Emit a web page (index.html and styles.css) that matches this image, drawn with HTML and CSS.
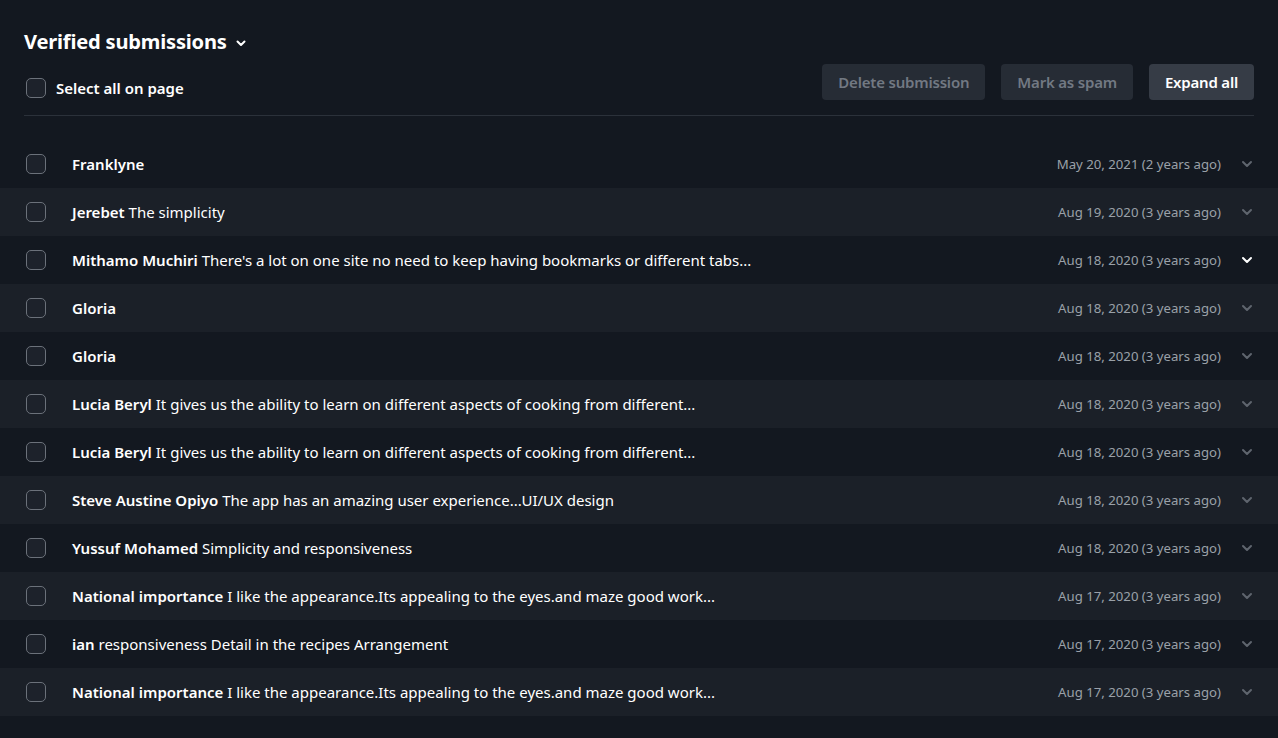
FILE: index.html
```html
<!DOCTYPE html>
<html>
<head>
<meta charset="utf-8">
<link rel="stylesheet" href="styles.css">
</head>
<body>
<div class="page">
  <header class="head">
    <h1 class="title">Verified submissions <svg class="title-chev" width="10" height="7" viewBox="0 0 10 7"><path d="M1.5 1.5 L5 5 L8.5 1.5" fill="none" stroke="#fff" stroke-width="2" stroke-linecap="round" stroke-linejoin="round"/></svg></h1>
    <div class="toolbar">
      <label class="select-all"><span class="box"></span><span>Select all on page</span></label>
      <div class="actions">
        <button class="btn btn-disabled">Delete submission</button>
        <button class="btn btn-disabled">Mark as spam</button>
        <button class="btn btn-primary">Expand all</button>
      </div>
    </div>
  </header>
  <ul class="list">
    <li class="row"><span class="box"></span><span class="text"><b>Franklyne</b></span><span class="date">May 20, 2021 (2 years ago)</span><svg class="chev" viewBox="0 0 10 6"><path d="M1 1 L5 5 L9 1"/></svg></li>
    <li class="row"><span class="box"></span><span class="text"><b>Jerebet</b> The simplicity</span><span class="date">Aug 19, 2020 (3 years ago)</span><svg class="chev" viewBox="0 0 10 6"><path d="M1 1 L5 5 L9 1"/></svg></li>
    <li class="row"><span class="box"></span><span class="text"><b>Mithamo Muchiri</b> There's a lot on one site no need to keep having bookmarks or different tabs...</span><span class="date">Aug 18, 2020 (3 years ago)</span><svg class="chev chev-active" viewBox="0 0 10 6"><path d="M1 1 L5 5 L9 1"/></svg></li>
    <li class="row"><span class="box"></span><span class="text"><b>Gloria</b></span><span class="date">Aug 18, 2020 (3 years ago)</span><svg class="chev" viewBox="0 0 10 6"><path d="M1 1 L5 5 L9 1"/></svg></li>
    <li class="row"><span class="box"></span><span class="text"><b>Gloria</b></span><span class="date">Aug 18, 2020 (3 years ago)</span><svg class="chev" viewBox="0 0 10 6"><path d="M1 1 L5 5 L9 1"/></svg></li>
    <li class="row"><span class="box"></span><span class="text"><b>Lucia Beryl</b> It gives us the ability to learn on different aspects of cooking from different...</span><span class="date">Aug 18, 2020 (3 years ago)</span><svg class="chev" viewBox="0 0 10 6"><path d="M1 1 L5 5 L9 1"/></svg></li>
    <li class="row"><span class="box"></span><span class="text"><b>Lucia Beryl</b> It gives us the ability to learn on different aspects of cooking from different...</span><span class="date">Aug 18, 2020 (3 years ago)</span><svg class="chev" viewBox="0 0 10 6"><path d="M1 1 L5 5 L9 1"/></svg></li>
    <li class="row"><span class="box"></span><span class="text"><b>Steve Austine Opiyo</b> The app has an amazing user experience...UI/UX design</span><span class="date">Aug 18, 2020 (3 years ago)</span><svg class="chev" viewBox="0 0 10 6"><path d="M1 1 L5 5 L9 1"/></svg></li>
    <li class="row"><span class="box"></span><span class="text"><b>Yussuf Mohamed</b> Simplicity and responsiveness</span><span class="date">Aug 18, 2020 (3 years ago)</span><svg class="chev" viewBox="0 0 10 6"><path d="M1 1 L5 5 L9 1"/></svg></li>
    <li class="row"><span class="box"></span><span class="text"><b>National importance</b> I like the appearance.Its appealing to the eyes.and maze good work...</span><span class="date">Aug 17, 2020 (3 years ago)</span><svg class="chev" viewBox="0 0 10 6"><path d="M1 1 L5 5 L9 1"/></svg></li>
    <li class="row"><span class="box"></span><span class="text"><b>ian</b> responsiveness Detail in the recipes Arrangement</span><span class="date">Aug 17, 2020 (3 years ago)</span><svg class="chev" viewBox="0 0 10 6"><path d="M1 1 L5 5 L9 1"/></svg></li>
    <li class="row"><span class="box"></span><span class="text"><b>National importance</b> I like the appearance.Its appealing to the eyes.and maze good work...</span><span class="date">Aug 17, 2020 (3 years ago)</span><svg class="chev" viewBox="0 0 10 6"><path d="M1 1 L5 5 L9 1"/></svg></li>
  </ul>
</div>
</body>
</html>
```
FILE: styles.css
```css
* { box-sizing: border-box; }
html, body { margin: 0; padding: 0; }
body {
  background: #131820;
  color: #ffffff;
  font-family: "Noto Sans", "Open Sans", sans-serif;
  font-size: 15px;
  overflow: hidden;
}
.page { padding-top: 28px; }
.head { padding: 0 24px; }
.title {
  margin: 0;
  font-size: 20.1px;
  font-weight: 700;
  line-height: 28px;
  display: flex;
  align-items: center;
  gap: 9px;
  letter-spacing: -0.2px;
}
.title-chev { margin-top: 3px; }
.toolbar {
  display: flex;
  justify-content: space-between;
  align-items: flex-start;
  margin-top: 8px;
  padding-bottom: 15px;
  border-bottom: 1px solid #2b313a;
}
.select-all {
  display: flex;
  align-items: center;
  gap: 10px;
  margin-top: 14px;
  padding-left: 2px;
  font-weight: 600;
  font-size: 15px;
}
.box {
  width: 20px;
  height: 20px;
  border: 1.5px solid #6b717a;
  border-radius: 5px;
  background: #1d222b;
  flex: none;
}
.actions { display: flex; gap: 16px; }
.btn {
  font-family: inherit;
  font-size: 15px;
  font-weight: 600;
  height: 36px;
  padding: 0 16px;
  border: none;
  border-radius: 4px;
  letter-spacing: -0.2px;
}
.btn-disabled { background: #262c35; color: #727983; }
.btn-primary { background: #363c46; color: #ffffff; }
.list { list-style: none; margin: 24px 0 0; padding: 0; }
.row {
  height: 48px;
  display: flex;
  align-items: center;
  padding: 0 26px 0 26px;
}
.row:nth-child(even) { background: #1b2028; }
.text {
  flex: 1;
  margin-left: 26px;
  white-space: nowrap;
}
.text b { font-weight: 600; }
.date {
  color: #9aa0a8;
  font-size: 13.2px;
}
.chev {
  width: 10px;
  height: 6px;
  margin-left: 21px;
  fill: none;
  stroke: #5f656e;
  stroke-width: 2;
  stroke-linecap: round;
  stroke-linejoin: round;
  overflow: visible;
}
.chev-active { stroke: #ffffff; }
```
